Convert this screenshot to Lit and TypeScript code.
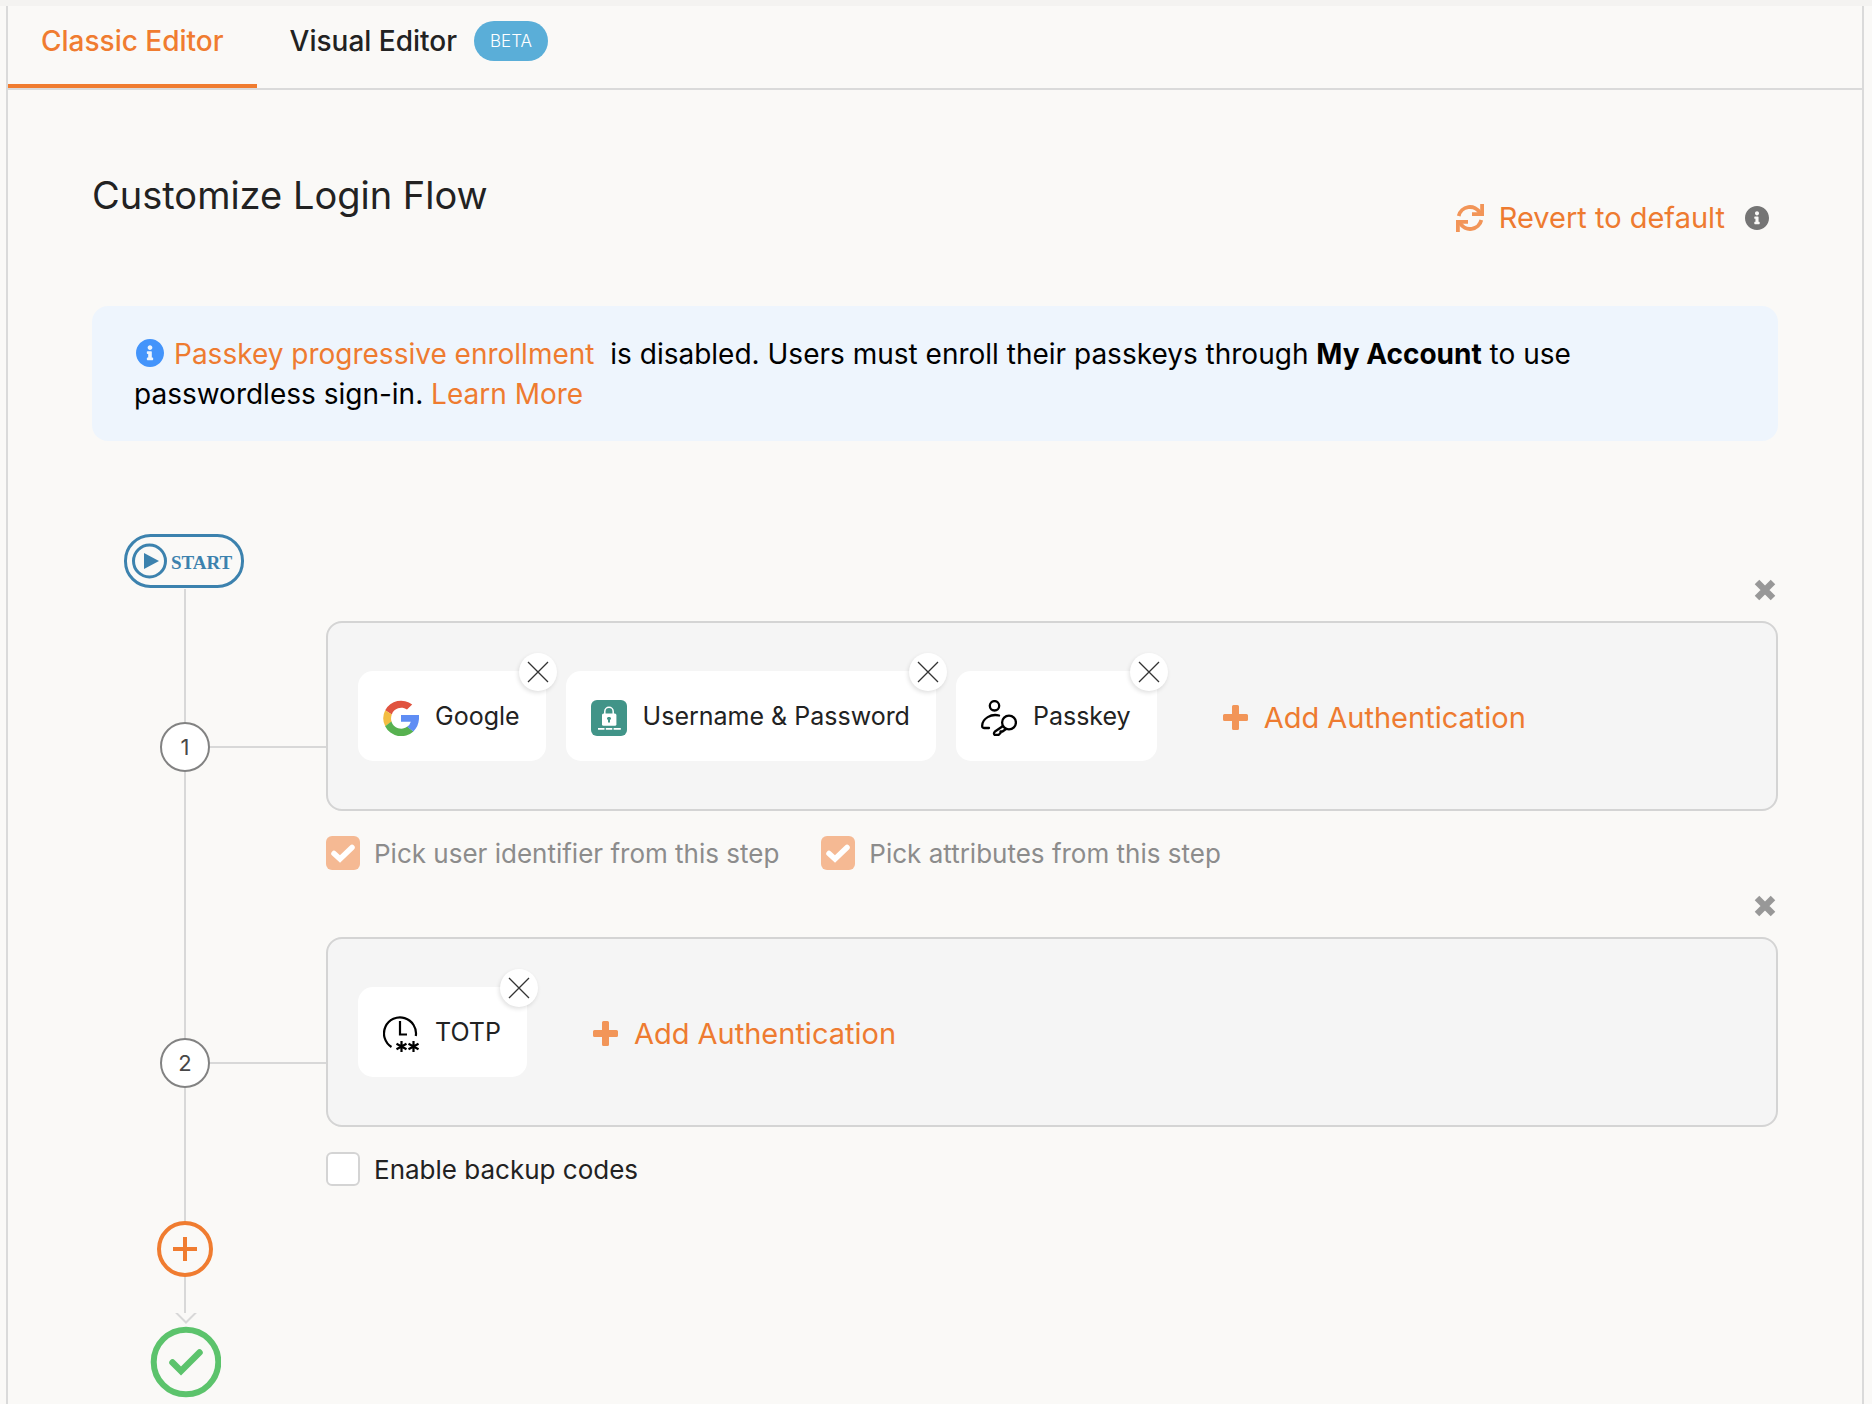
import { LitElement, html, css, svg } from "lit";
import { customElement, property } from "lit/decorators.js";

type Factor = { name: string; icon: string };
type Option = { label: string; checked: boolean; locked: boolean };
type Step = { factors: Factor[]; options: Option[] };

const STEPS: Step[] = [
  {
    factors: [
      { name: "Google", icon: "google" },
      { name: "Username & Password", icon: "lock" },
      { name: "Passkey", icon: "passkey" },
    ],
    options: [
      { label: "Pick user identifier from this step", checked: true, locked: true },
      { label: "Pick attributes from this step", checked: true, locked: true },
    ],
  },
  {
    factors: [{ name: "TOTP", icon: "totp" }],
    options: [{ label: "Enable backup codes", checked: false, locked: false }],
  },
];

const asterisk = (x: number) => svg`
  <path d="M${x} 25v11M${x - 5} 27.700l10 5.600M${x + 5} 27.700l-10 5.600" stroke-width="2.200"/>`;

const ICONS: Record<string, unknown> = {
  google: svg`
    <path fill="#e0533f" d="M2.2 10.200A18 18 0 0 1 29.200 4.500L24 9.600A9.800 9.800 0 0 0 8.800 14.600Z"/>
    <path fill="#f3bd42" d="M2.200 10.200 8.800 14.600A10.400 10.400 0 0 0 8.600 21.700L2.200 26.300A18 18 0 0 1 2.200 10.200Z"/>
    <path fill="#57b150" d="M8.400 21.500A10.300 10.300 0 0 0 24.400 26.600L30.400 31.400A18 18 0 0 1 2.100 26.300Z"/>
    <path fill="#5f8df4" d="M18 15H36C36.500 21.600 34.600 27.600 30.400 31.400L24.200 26.700A8.200 8.200 0 0 0 27.800 21.800H18Z"/>`,
  lock: svg`
    <rect width="36" height="36" rx="6" fill="#419488"/>
    <path d="M13.800 14V11.500a4.200 4.200 0 0 1 8.400 0V14" fill="none" stroke="#fff" stroke-width="1.500"/>
    <rect x="11" y="13.500" width="14.400" height="12.300" rx="1.500" fill="#fff"/>
    <path d="M18 17v5.500M16 18.500h4" stroke="#419488" stroke-width="2"/>
    <path d="M7 28.800h6.500M14.800 28.800h6.500M22.600 28.800h7.200" stroke="#fff" stroke-width="1.700"/>`,
  passkey: svg`
    <g fill="none" stroke="#000" stroke-width="2.300" stroke-linecap="round" stroke-linejoin="round">
      <circle cx="13.500" cy="5.800" r="4.700"/>
      <path d="M18 15.500C10 13.500 1.500 18.500 1.200 25.500Q1 28 3 28H8"/>
      <circle cx="28" cy="22.500" r="6.900"/>
      <path d="M22 26 14 31.500Q12 33.500 13.800 35H17.500L19.500 33V31.500H21.500L25 29"/>
    </g>`,
  totp: svg`
    <g fill="none" stroke="#000" stroke-width="2.200">
      <path d="M8.500 31A16 16 0 1 1 32.800 20"/>
      <path d="M17 5V18.500H24"/>
      ${asterisk(18.5)}${asterisk(30.5)}
    </g>`,
};

const infoIcon = (cls: string) => html`<svg class=${cls} viewBox="8 8 496 496" aria-hidden="true">
    <path fill="currentColor" d="M256 8C119.043 8 8 119.083 8 256c0 136.997 111.043 248 248 248s248-111.003 248-248C504 119.083 392.957 8 256 8zm0 110c23.196 0 42 18.804 42 42s-18.804 42-42 42-42-18.804-42-42 18.804-42 42-42zm56 254c0 6.627-5.373 12-12 12h-88c-6.627 0-12-5.373-12-12v-24c0-6.627 5.373-12 12-12h12v-64h-12c-6.627 0-12-5.373-12-12v-24c0-6.627 5.373-12 12-12h64c6.627 0 12 5.373 12 12v100h12c6.627 0 12 5.373 12 12v24z"/>
  </svg>`;

@customElement("flow-step")
export class FlowStep extends LitElement {
  @property({ type: Number }) index = 1;
  @property({ attribute: false }) step!: Step;

  static styles = css`
    :host { display: block; }
    * { box-sizing: border-box; }
    button { font: inherit; color: inherit; background: none; border: 0; padding: 0; cursor: pointer; }
    svg { display: block; flex: none; }
    .step { display: flex; align-items: stretch; }
    .rail { flex: none; width: 50px; display: flex; flex-direction: column; align-items: center; }
    .upper { flex: none; height: 143px; display: flex; flex-direction: column; align-items: center; }
    .first .upper { height: 188px; }
    .line { flex: 1; width: 2px; background: #d8d8d8; }
    .num { flex: none; width: 50px; height: 50px; border: 2px solid #828282; border-radius: 50%; background: #fff;
      display: grid; place-items: center; font-size: 22px; color: #484848; }
    .connector { flex: none; width: 116px; height: 2px; margin-top: 167px; background: #d8d8d8; }
    .first .connector { margin-top: 212px; }
    .body { flex: 1; min-width: 0; padding-bottom: 25px; }
    .first .body { padding-top: 45px; }
    .top { display: flex; justify-content: flex-end; height: 42px; padding-right: 2px; align-items: flex-start; }
    .box { min-height: 190px; border: 2px solid #d4d4d4; border-radius: 16px; background: #f5f5f5;
      padding: 48px 30px; display: flex; flex-wrap: wrap; align-items: flex-start; gap: 20px; }
    .card { position: relative; height: 90px; border-radius: 15px; background: #fff; display: flex; align-items: center;
      gap: 16px; padding: 0 26px 0 25px; font-size: 25px; font-weight: 400; color: #222; }
    .card > svg { margin-top: 4px; }
    .close { position: absolute; top: -18px; right: -11px; width: 38px; height: 38px; border-radius: 50%; background: #fff;
      box-shadow: -1px 2px 4px rgba(0, 0, 0, 0.12); display: grid; place-items: center; }
    .add { height: 90px; margin-left: 46px; padding-top: 2px; display: flex; align-items: center; gap: 16px; font-size: 29px; font-weight: 400; color: #ee7b30; }
    .options { display: flex; flex-wrap: wrap; gap: 42px; padding-top: 25px; }
    .option { display: flex; align-items: center; gap: 14px; height: 34px; font-size: 26px; font-weight: 400; color: #222; }
    .option.locked { color: #8c8c8c; }
    .check { flex: none; appearance: none; margin: 0; width: 34px; height: 34px; border: 2px solid #d4d4d4; border-radius: 6px; background: #fff; }
    .tick { display: grid; flex: none; }
    .tick > * { grid-area: 1 / 1; place-self: center; }
    .tick > svg { pointer-events: none; }
    .check:checked { border: 0; background: #f5b993; }
  `;

  private cross = svg`<path d="M1 1 21 21M21 1 1 21" stroke="#333" stroke-width="1.300" fill="none"/>`;

  render() {
    const first = this.index === 1;
    return html`
      <section class="step ${first ? "first" : ""}">
        <div class="rail">
          <div class="upper">
            ${first
              ? html`<svg width="122" height="55" viewBox="0 0 122 55" role="img" aria-label="Start">
                  <rect x="1.500" y="1.500" width="117" height="51" rx="25" fill="none" stroke="#3c82ae" stroke-width="3"/>
                  <circle cx="25.500" cy="27" r="16" fill="none" stroke="#3c82ae" stroke-width="3"/>
                  <path d="M20 19v16l15-8z" fill="#3c82ae"/>
                  <text x="47" y="35" font-family="Liberation Serif, serif" font-weight="700" font-size="19" fill="#3c82ae">START</text>
                </svg>`
              : ""}
            <div class="line"></div>
          </div>
          <div class="num">${this.index}</div>
          <div class="line"></div>
        </div>
        <div class="connector"></div>
        <div class="body">
          <div class="top">
            <button aria-label="Remove step ${this.index}">
              <svg width="22" height="22" viewBox="0 0 22 22"><path d="M3 3 19 19M19 3 3 19" stroke="#989898" stroke-width="6.400" fill="none"/></svg>
            </button>
          </div>
          <div class="box">
            ${this.step.factors.map(
              (f) => html`<div class="card">
                <svg width="36" height="36" viewBox="0 0 36 36" aria-hidden="true">${ICONS[f.icon]}</svg>
                <span>${f.name}</span>
                <button class="close" aria-label="Remove ${f.name}">
                  <svg width="22" height="22" viewBox="0 0 22 22">${this.cross}</svg>
                </button>
              </div>`
            )}
            <button class="add">
              <svg width="25" height="25" viewBox="0 0 25 25" aria-hidden="true">
                <path fill="#f29558" d="M10.500 0h4q1.500 0 1.500 1.500V9h7.500q1.500 0 1.500 1.500v4q0 1.500-1.500 1.500H16v7.500q0 1.500-1.500 1.500h-4Q9 25 9 23.500V16H1.500Q0 16 0 14.500v-4Q0 9 1.500 9H9V1.500Q9 0 10.500 0Z"/>
              </svg>
              <span>Add Authentication</span>
            </button>
          </div>
          <div class="options">
            ${this.step.options.map(
              (o) => html`<label class="option ${o.locked ? "locked" : ""}">
                <span class="tick">
                  <input class="check" type="checkbox" .checked=${o.checked} ?disabled=${o.locked} />
                  ${o.checked
                    ? html`<svg width="26" height="22" viewBox="0 0 26 22"><path d="M4 11.500 10 17 22 5.500" stroke="#fff" stroke-width="5.500" stroke-linecap="round" fill="none"/></svg>`
                    : ""}
                </span>
                <span>${o.label}</span>
              </label>`
            )}
          </div>
        </div>
      </section>`;
  }
}

@customElement("app-root")
export class AppRoot extends LitElement {
  static styles = css`
    :host { display: flex; min-height: 100vh; background: #faf9f7; color: #222;
      font-family: Inter, "Liberation Sans", sans-serif; border-top: 6px solid #f4f3f1; box-sizing: border-box; }
    * { box-sizing: border-box; }
    button { font: inherit; color: inherit; background: none; border: 0; padding: 0; cursor: pointer; }
    a { color: #ee7b30; text-decoration: none; }
    svg { display: block; flex: none; }
    .panel { flex: 1; min-width: 0; margin: 0 8px 0 6px; border: 2px solid #dadada; border-width: 0 2px; }
    .tabs { display: flex; height: 84px; border-bottom: 2px solid #dadada; }
    .tab { display: flex; align-items: center; gap: 17px; padding: 0 33px 13px; font-size: 28px; font-weight: 500; color: #222; border-bottom: 0 solid #f07c30; }
    .tab.active { color: #f07c30; border-bottom-width: 4px; padding-bottom: 9px; }
    .badge { height: 40px; padding: 0 16px; border-radius: 20px; background: #5aaed8; color: #fff; font-size: 17px; font-weight: 300; display: grid; place-items: center; }
    main { padding: 80px 84px 0; }
    .head { display: flex; justify-content: space-between; align-items: flex-start; height: 136px; padding-right: 9px; }
    h1 { margin: 0; font-size: 38px; font-weight: 400; line-height: 50px; }
    .revert { display: flex; align-items: center; gap: 20px; padding-top: 28px; }
    .revert button { display: flex; align-items: center; gap: 15px; font-size: 29px; font-weight: 400; line-height: 40px; color: #ee7b30; }
    .grey { width: 24px; height: 24px; color: #757575; }
    .blue { display: inline-block; vertical-align: -3px; width: 28px; height: 28px; margin: 0 10px 0 2px; color: #4394fb; }
    .notice { margin: 0; background: #eef5fd; border-radius: 16px; padding: 28px 60px 27px 42px; font-size: 28px; font-weight: 400; line-height: 40px; color: #000; }
    .notice b { font-weight: 700; }
    .notice a:first-of-type { margin-right: 8px; }
    .flow { padding: 93px 0 0 68px; }
    .tail { width: 50px; display: flex; flex-direction: column; align-items: center; }
    .line { width: 2px; height: 10px; background: #d8d8d8; }
    .line.long { height: 36px; }
    .plus { width: 56px; height: 56px; }
  `;

  render() {
    return html`
      <div class="panel">
        <nav class="tabs">
          <button class="tab active">Classic Editor</button>
          <button class="tab">Visual Editor <span class="badge">BETA</span></button>
        </nav>
        <main>
          <div class="head">
            <h1>Customize Login Flow</h1>
            <div class="revert">
              <button>
                <svg width="28" height="28" viewBox="0 0 28 28" aria-hidden="true">
                  <g fill="none" stroke="#f29558" stroke-width="3.800">
                    <path d="M2.700 12A11.500 11.500 0 0 1 24 9"/><path d="M25.300 16A11.500 11.500 0 0 1 4 19"/>
                    <path d="M26.100 0V10.200H16M1.900 28V17.800H12"/>
                  </g>
                </svg>
                <span>Revert to default</span>
              </button>
              ${infoIcon("grey")}
            </div>
          </div>
          <p class="notice">${infoIcon("blue")}<a href="#enrollment">Passkey progressive enrollment</a> is disabled. Users must enroll their passkeys through <b>My Account</b> to use passwordless sign-in. <a href="#learn">Learn More</a></p>
          <div class="flow">
            ${STEPS.map((s, i) => html`<flow-step .index=${i + 1} .step=${s}></flow-step>`)}
            <div class="tail">
              <div class="line"></div>
              <button class="plus" aria-label="Add step">
                <svg width="56" height="56" viewBox="0 0 56 56"><g fill="none" stroke="#f07c30"><circle cx="28" cy="28" r="26" stroke-width="4"/><path d="M28 16v24M16 28h24" stroke-width="4"/></g></svg>
              </button>
              <div class="line long"></div>
              <svg width="72" height="88" viewBox="0 0 72 88" role="img" aria-label="Flow complete">
                <path d="M26.500 -1 37 9.500 47.500 -1" fill="none" stroke="#d8d8d8" stroke-width="2" />
                <circle cx="37" cy="49" r="32.300" fill="none" stroke="#5cc36c" stroke-width="6"/>
                <path d="M23.500 49.500 32 58 50.500 39.500" fill="none" stroke="#5cc36c" stroke-width="6.500" stroke-linecap="round"/>
              </svg>
            </div>
          </div>
        </main>
      </div>`;
  }
}
